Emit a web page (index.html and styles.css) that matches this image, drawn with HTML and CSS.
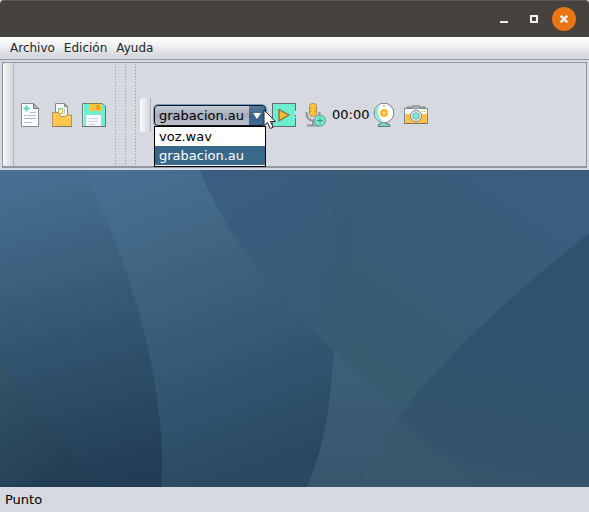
FILE: index.html
```html
<!DOCTYPE html>
<html lang="es">
<head>
<meta charset="utf-8">
<title>Punto</title>
<link rel="stylesheet" href="styles.css">
</head>
<body>
<header class="titlebar">
  <button class="win" aria-label="Minimizar"><svg width="24" height="24"><path d="M8 14h8v2H8z" fill="#f2f1f0"/></svg></button>
  <button class="win" aria-label="Maximizar"><svg width="24" height="24"><rect x="9" y="9" width="6" height="6" fill="none" stroke="#f2f1f0" stroke-width="2"/></svg></button>
  <button class="win close" aria-label="Cerrar"><svg width="24" height="24"><path d="M8.700 8.700l6.600 6.600M15.300 8.700l-6.600 6.600" stroke="#f2f1f0" stroke-width="2.400"/></svg></button>
</header>
<nav class="menubar">
  <button>Archivo</button><button>Edición</button><button>Ayuda</button>
</nav>
<section class="toolbars">
  <span class="grip"></span>
  <div class="group files">
    <button class="tool" aria-label="Nuevo"><svg width="24" height="24">
      <path d="M3.500 .5h12l5 5v18h-17z" fill="#fbfcfc" stroke="#858b91"/>
      <path d="M15.500 .5v5h5z" fill="#b9bec5" stroke="#72787e"/>
      <path d="M8.500 2.500v6M5.500 5.500h6" stroke="#57d9b7" stroke-width="2"/>
      <path d="M12 9.500h6M6 12.500h3M10 12.500h8M6 15.500h12M6 19.500h8" stroke="#b6bcc4"/>
    </svg></button>
    <button class="tool" aria-label="Abrir"><svg width="24" height="24">
      <path d="M5.500 .5h9l3 3v12h-12z" fill="#fafafa" stroke="#858b91"/>
      <path d="M14.500 .5v3h3z" fill="#b9bec5" stroke="#7b8187"/>
      <rect x="8.500" y="5.500" width="4" height="5" fill="#fff" stroke="#f2ae3b"/>
      <path d="M8 5h3v2H8z" fill="#7adcc4"/><path d="M14.500 5v6" stroke="#c0c5ca"/>
      <path d="M2.500 9.500h5.500l3 4h4l1.500-1.500h5v11.500h-19z" fill="#ffc64f" stroke="#b59356"/>
      <path d="M17 14.500h3" stroke="#fff0b8"/><path d="M2 23.500h20" stroke="#8a7b60"/>
    </svg></button>
    <button class="tool" aria-label="Guardar"><svg width="24" height="24">
      <path d="M.5.5h20l3 3v20H.5z" fill="#71edcf" stroke="#64877f"/>
      <path d="M1.500 1v22" stroke="#a2f8e4"/>
      <rect x="7" y="0" width="12" height="8" fill="#ffc437"/><path d="M7 .5h12" stroke="#8e7d50"/>
      <rect x="14" y="2" width="4" height="5" fill="#f5a820"/>
      <rect x="4" y="12" width="15" height="11" fill="#f8f9fc"/>
      <path d="M7 15.500h9M7 18.500h9M7 21.500h6" stroke="#c8cfd9"/>
      <path d="M0 23.500h24M23.500 3v20" stroke="#66777a"/>
    </svg></button>
  </div>
  <div class="dots"></div>
  <span class="grip short"></span>
  <div class="combo">
    <select aria-label="Sonido"><option>voz.wav</option><option selected>grabacion.au</option></select>
    <svg class="arrow" width="16" height="19"><path d="M4 7h8l-4 6z" fill="#fff"/></svg>
    <ul class="popup"><li>voz.wav</li><li class="chosen">grabacion.au</li></ul>
    <svg class="pointer" width="15" height="21" viewBox="0 0 15 21"><path d="M1 1v15.500l3.500-3 2.700 6 2.900-1.300-2.700-5.700h5z" fill="#fff" stroke="#222"/></svg>
  </div>
  <div class="group media">
    <button class="tool" aria-label="Reproducir"><svg width="24" height="24">
      <rect x=".5" y=".5" width="23" height="23" fill="#6eedcf" stroke="#626d70"/>
      <path d="M7 6.500l10 5.500-10 6z" fill="#fdbb2e" stroke="#806d42" stroke-width="1.300" stroke-linejoin="round"/>
      <path d="M23.500 8v4M23.500 14v1" stroke="#caf8ee"/>
    </svg></button>
    <button class="tool" aria-label="Grabar"><svg width="24" height="24">
      <path d="M2.500 9c0 7 3 8.500 6.500 8.500s6.500-2 6.500-8.500M9 17.500v4M3 22.500h13" fill="none" stroke="#8d949b" stroke-width="2"/>
      <rect x="5.500" y=".5" width="7" height="13" rx="3" fill="#ffc43d" stroke="#a58d58"/>
      <path d="M6 5.500h2M10 5.500h2M6 8.500h2M10 8.500h2" stroke="#dfa028"/>
      <circle cx="16" cy="17.500" r="5.500" fill="#73e9ce" stroke="#649d92"/>
      <path d="M16 14.500v6M13 17.500h6" stroke="#438e83"/>
    </svg></button>
    <span class="time">00:00</span>
    <button class="tool" aria-label="Webcam"><svg width="24" height="24">
      <path d="M9 18h5v3h3l1 2.500H6l1-2.500h2z" fill="#6edfc6" stroke="#66777a"/>
      <circle cx="12" cy="10" r="9.800" fill="#fff" stroke="#758288"/>
      <path d="M8 1.500A9.500 9.500 0 0 0 12 19.300C5 15 5 6 8 1.500z" fill="#8ceed9"/>
      <circle cx="12" cy="10" r="4" fill="#ffb52d"/><circle cx="12" cy="10" r="1.500" fill="#ffe18f"/>
      <circle cx="12" cy="3" r="1" fill="#f5b36b"/>
    </svg></button>
    <button class="tool" aria-label="Cámara"><svg width="24" height="24">
      <path d="M3 6V4h3v2M7 6l1-3h8l1 3M18 6V4h3v2" fill="#b3bac2" stroke="#707880"/>
      <rect x=".5" y="5.500" width="23" height="15" fill="#fbfbf9" stroke="#858b91"/>
      <path d="M1 11h22v9H1z" fill="#ffc145"/>
      <path d="M0 20.500h24" stroke="#756f65"/>
      <path d="M18 8.500h1M20 8.500h1" stroke="#f1ad3b"/>
      <circle cx="12" cy="13" r="5.500" fill="#edf1f2" stroke="#7c8689"/>
      <circle cx="12" cy="13" r="3.200" fill="#80ead4" stroke="#69b7a8"/>
    </svg></button>
  </div>
</section>
<main class="desktop">
  <svg viewBox="0 0 589 317" preserveAspectRatio="none" aria-hidden="true">
    <defs>
      <linearGradient id="base" gradientUnits="userSpaceOnUse" x1="520" y1="0" x2="370" y2="220"><stop offset="0" stop-color="#3a5e80"/><stop offset=".5" stop-color="#3a5c77"/><stop offset="1" stop-color="#395c70"/></linearGradient>
      <linearGradient id="mid" gradientUnits="userSpaceOnUse" x1="220" y1="0" x2="330" y2="200"><stop offset="0" stop-color="#395e81"/><stop offset="1" stop-color="#395b73"/></linearGradient>
      <linearGradient id="midfade" x1="0" x2="1" y1="0" y2="0"><stop offset=".85" stop-color="#fff"/><stop offset="1" stop-color="#000"/></linearGradient>
      <mask id="fade" maskUnits="userSpaceOnUse" x="150" y="0" width="200" height="317"><rect x="150" width="200" height="317" fill="url(#midfade)"/></mask>
      <linearGradient id="band" gradientUnits="userSpaceOnUse" x1="110" y1="0" x2="230" y2="317"><stop offset="0" stop-color="#486f91"/><stop offset=".17" stop-color="#446b8c"/><stop offset=".3" stop-color="#416682"/><stop offset=".5" stop-color="#3a5d79"/><stop offset=".75" stop-color="#31536d"/><stop offset="1" stop-color="#2a4860"/></linearGradient>
      <linearGradient id="left" gradientUnits="userSpaceOnUse" x1="30" y1="0" x2="110" y2="317"><stop offset="0" stop-color="#486f92"/><stop offset=".17" stop-color="#426888"/><stop offset=".5" stop-color="#345671"/><stop offset="1" stop-color="#213c54"/></linearGradient>
      <linearGradient id="corner" x1="0" y1="0" x2=".5" y2="1"><stop offset="0" stop-color="#345567"/><stop offset="1" stop-color="#233e54"/></linearGradient>
      <linearGradient id="right" gradientUnits="userSpaceOnUse" x1="550" y1="80" x2="500" y2="317"><stop offset="0" stop-color="#2f5271"/><stop offset=".5" stop-color="#31536d"/><stop offset="1" stop-color="#35556b"/></linearGradient>
      <linearGradient id="wedge" x1="0" y1="0" x2="0" y2="1"><stop offset="0" stop-color="#3d607a"/><stop offset=".5" stop-color="#3b5b73"/><stop offset="1" stop-color="#35566b"/></linearGradient>
    </defs>
    <rect width="589" height="317" fill="url(#base)"/>
    <path d="M150 0H350V182H150Z" fill="url(#mid)" mask="url(#fade)"/>
    <path d="M589 63Q455 170 400 245Q377 277 360 317H589Z" fill="url(#right)"/>
    <path d="M334 182Q366 212 400 245L367 317H300Z" fill="url(#wedge)"/>
    <path d="M400 245L475 317H360Q377 277 400 245Z" fill="#39596f" opacity=".65"/>
    <path d="M81 0H200C226 67 272 121 334 182C330 224 329 265 307 317H155Z" fill="url(#band)"/>
    <path d="M0 0H81C124 73 169 214 161 317H0Z" fill="url(#left)"/>
    <path d="M0 190Q42 250 98 317H0Z" fill="url(#corner)"/>
  </svg>
</main>
<footer class="status">Punto</footer>
</body>
</html>
```
FILE: styles.css
```css
* { box-sizing: border-box; }
html, body { height: 100%; }
body {
  margin: 0;
  display: flex;
  flex-direction: column;
  background: #d6d9df;
  color: #000;
  font: 13px/16px "DejaVu Sans", sans-serif;
}
button { border: 0; padding: 0; background: none; color: inherit; font: inherit; }
svg { display: block; }
.titlebar {
  height: 37px;
  flex: none;
  display: flex;
  align-items: center;
  justify-content: flex-end;
  gap: 6px;
  padding-right: 13px;
  background: #46423e;
  border-top: 1px solid #5a5854;
  border-radius: 4px 4px 0 0;
}
.win { width: 24px; height: 24px; border-radius: 50%; }
.close { background: #e97414; }
.menubar {
  height: 23px;
  flex: none;
  display: flex;
  align-items: center;
  gap: 9px;
  padding-left: 10px;
  background: linear-gradient(#fff, #f4f5f7 30%, #d6d9df 85%);
  border-bottom: 1px solid #9297a1;
  color: #232629;
  font-size: 12px;
}
.toolbars {
  height: 106px;
  flex: none;
  margin: 2px;
  display: flex;
  align-items: center;
  border: 1px solid #9297a1;
  border-bottom-width: 2px;
}
.grip {
  width: 11px;
  align-self: stretch;
  border-right: 1px solid #afb3ba;
  border-radius: 3px 0 0 3px;
  background: linear-gradient(90deg, #fafbfc, #d2d5da);
}
.short { height: 34px; align-self: center; margin-left: 4px; }
.group { display: flex; align-items: center; gap: 8px; }
.files { margin-left: 4px; }
.tool { width: 24px; height: 24px; }
.dots {
  align-self: stretch;
  width: 21px;
  margin: 1px 0 1px 9px;
  background: repeating-linear-gradient(#9297a1 0 1px, #d6d9df 1px 3px);
  position: relative;
}
.dots::before {
  content: "";
  position: absolute;
  inset: 0 1px;
  background: linear-gradient(90deg, #d6d9df 9px, transparent 9px 10px, #d6d9df 10px);
}
.combo { position: relative; margin: 2px 0 0 3px; width: 112px; height: 21px; }
select {
  display: block;
  appearance: none;
  width: 100%;
  height: 100%;
  padding: 0 18px 0 4px;
  border: 1px solid #11161c;
  border-radius: 4px;
  background:
    linear-gradient(#577b9b, #3b6287 50%, #426b91) right / 16px 100% no-repeat,
    linear-gradient(#c8ccd5, #a4aab7 50%, #bcc1cc);
  box-shadow: 0 0 0 1px #6f9dca;
  color: #000;
  font: inherit;
}
.arrow { position: absolute; top: 1px; right: 1px; pointer-events: none; }
.popup {
  position: absolute;
  top: 21px;
  left: 0;
  width: 112px;
  margin: 0;
  padding: 0 0 1px;
  list-style: none;
  border: 1px solid #000;
  background: #fff;
  z-index: 1;
}
.popup li { height: 19px; padding: 0 4px; line-height: 19px; }
.popup .chosen { background: #39698a; color: #fff; }
.pointer { position: absolute; top: 4px; left: 109px; z-index: 2; }
.media { margin-left: 6px; }
.time { width: 36px; margin: 0 -4px; }
.desktop { flex: 1; min-height: 0; }
.desktop svg { width: 100%; height: 100%; }
.status { flex: none; height: 25px; padding: 0 5px; line-height: 25px; }
```
